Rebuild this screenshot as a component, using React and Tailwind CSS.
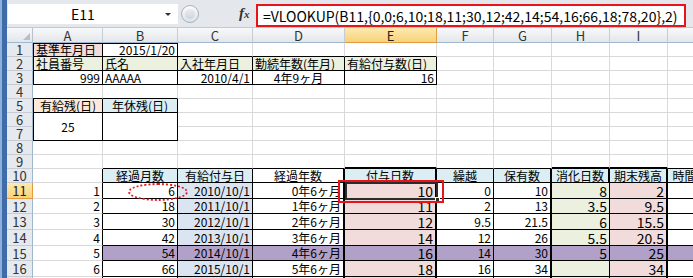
import React from "react";

const PINK = "bg-[#f2dcdb]";
const BLUE = "bg-[#dbe5f1]";
const AQUA = "bg-[#daeef3]";
const GREEN = "bg-[#ebf1de]";
const PEACH = "bg-[#fde9d9]";
const PURPLE = "bg-[#b1a0c7]";

const COLS = ["A", "B", "C", "D", "E", "F", "G", "H", "I", "J"];
const NROWS = 17;

function buildCells() {
  const cells = [];
  for (let r = 0; r <= NROWS + 1; r++) {
    const row = [];
    for (let c = 0; c <= 10; c++) {
      row.push({ t: 0, r: 0, b: 0, l: 0, text: "", align: "r", bg: "", big: false });
    }
    cells.push(row);
  }
  const all = (r1, r2, c1, c2) => {
    for (let r = r1; r <= r2; r++)
      for (let c = c1; c <= c2; c++) {
        const x = cells[r][c];
        x.t = Math.max(x.t, 1);
        x.r = Math.max(x.r, 1);
        x.b = Math.max(x.b, 1);
        x.l = Math.max(x.l, 1);
      }
  };
  const set = (r, c, o) => Object.assign(cells[r][c], o);

  set(1, 0, { text: "基準年月日", align: "l", bg: PINK });
  set(1, 1, { text: "2015/1/20" });
  all(1, 1, 0, 1);

  ["社員番号", "氏名", "入社年月日", "勤続年数(年月)", "有給付与数(日)"].forEach((t, c) =>
    set(2, c, { text: t, align: "l", bg: GREEN })
  );
  set(3, 0, { text: "999" });
  set(3, 1, { text: "AAAAA", align: "l" });
  set(3, 2, { text: "2010/4/1" });
  set(3, 3, { text: "4年9ヶ月", align: "c" });
  set(3, 4, { text: "16" });
  all(2, 3, 0, 4);

  set(5, 0, { text: "有給残(日)", align: "c", bg: PEACH });
  set(5, 1, { text: "年休残(日)", align: "c", bg: AQUA });
  set(6, 0, { text: "25", align: "c", span: true });
  set(6, 1, { span: true });
  set(7, 0, { skip: true });
  set(7, 1, { skip: true });
  all(5, 6, 0, 1);

  const heads = ["経過月数", "有給付与日", "経過年数", "付与日数", "繰越", "保有数", "消化日数", "期末残高", "時間有休"];
  const headBg = [AQUA, AQUA, "", AQUA, AQUA, AQUA, AQUA, AQUA, AQUA];
  heads.forEach((t, i) => set(10, i + 1, { text: t, align: "c", bg: headBg[i] }));
  all(10, 17, 1, 9);

  const B = [6, 18, 30, 42, 54, 66];
  const C = ["2010/10/1", "2011/10/1", "2012/10/1", "2013/10/1", "2014/10/1", "2015/10/1"];
  const D = ["0年6ヶ月", "1年6ヶ月", "2年6ヶ月", "3年6ヶ月", "4年6ヶ月", "5年6ヶ月"];
  const E = [10, 11, 12, 14, 16, 18];
  const F = [0, 2, 9.5, 12, 14, 16];
  const G = [10, 13, 21.5, 26, 30, 34];
  const H = [8, 3.5, 6, 5.5, 5, ""];
  const I = [2, 9.5, 15.5, 20.5, 25, 34];
  for (let k = 0; k < 7; k++) {
    const r = 11 + k;
    const has = k < 6;
    set(r, 0, { text: has ? String(k + 1) : "" });
    set(r, 1, { text: has ? String(B[k]) : "" });
    set(r, 2, { text: has ? C[k] : "", bg: BLUE });
    set(r, 3, { text: has ? D[k] : "" });
    set(r, 4, { text: has ? String(E[k]) : "", bg: PINK, big: true });
    set(r, 5, { text: has ? String(F[k]) : "" });
    set(r, 6, { text: has ? String(G[k]) : "" });
    set(r, 7, { text: has ? String(H[k]) : "", bg: GREEN, big: true });
    set(r, 8, { text: has ? String(I[k]) : "", bg: PINK, big: true });
  }
  for (let c = 1; c <= 9; c++) cells[15][c].bg = PURPLE;

  for (let r = 10; r <= 17; r++) {
    cells[r][4].l = 2;
    cells[r][4].r = 2;
    cells[r][7].l = 2;
    cells[r][8].r = 2;
  }
  cells[10][4].t = 2;
  cells[10][7].t = 2;
  cells[10][7].r = 2;
  cells[10][8].t = 2;
  cells[10][8].l = 2;
  return cells;
}

const RB = ["border-r border-r-[#d9d9d9]", "border-r border-r-black", "border-r-2 border-r-black"];
const BB = ["border-b border-b-[#d9d9d9]", "border-b border-b-black", "border-b-2 border-b-black"];
const ALIGN = { l: "justify-start pl-[2px]", r: "justify-end pr-[2px]", c: "justify-center" };

function Sheet() {
  const cells = buildCells();
  const out = [];

  // header row
  out.push(
    <div
      key="corner"
      className="relative border-r border-b border-r-[#b9c1cc] border-b-[#9eb6ce] bg-linear-to-b from-[#f7f8fa] to-[#e2e6eb]"
    >
      <svg className="absolute bottom-[2px] right-[2px]" width="7" height="7" viewBox="0 0 7 7">
        <path d="M7 0 L7 7 L0 7 Z" fill="#b7bfc9" />
      </svg>
    </div>
  );
  COLS.forEach((h) => {
    const sel = h === "E";
    out.push(
      <div
        key={"h" + h}
        className={
          "flex items-center justify-center border-r border-b text-[13px] leading-none " +
          (sel
            ? "border-r-[#e0a040] border-b-[#e29a3a] bg-linear-to-b from-[#fde9ae] to-[#f8d27c] text-[#222]"
            : "border-r-[#c5ccd5] border-b-[#9eb6ce] bg-linear-to-b from-[#f8f9fa] to-[#e3e6ea] text-[#333]")
        }
      >
        {h}
      </div>
    );
  });

  for (let r = 1; r <= NROWS; r++) {
    const sel = r === 11;
    out.push(
      <div
        key={"rh" + r}
        className={
          "flex items-center justify-center border-r border-b text-[13px] leading-none " +
          (sel
            ? "border-r-[#e29a3a] border-b-[#e29a3a] bg-linear-to-b from-[#fde9ae] to-[#f8d27c] text-[#222]"
            : "border-r-[#9eb6ce] border-b-[#c5ccd5] bg-[#e6e9ee] text-[#333]")
        }
      >
        {r}
      </div>
    );
    for (let c = 0; c < 10; c++) {
      const x = cells[r][c];
      if (x.skip) continue;
      const belowRow = x.span ? r + 2 : r + 1;
      const rr = Math.max(x.r, c < 9 ? cells[r][c + 1].l : 0);
      const bb = Math.max(x.b, cells[belowRow] ? cells[belowRow][c].t : 0);
      let cls =
        "flex items-center overflow-hidden whitespace-nowrap leading-none text-black " +
        RB[rr] +
        " " +
        BB[bb] +
        " " +
        ALIGN[x.align] +
        " " +
        (x.bg || "bg-white") +
        " " +
        (x.big ? "text-[14px]" : "text-[12px]");
      if (c === 0 && x.l > 0) cls += " border-l border-l-black";
      if (r === 1 && x.t > 0) cls += " border-t border-t-black";
      if (x.span) cls += " row-span-2";
      out.push(
        <div key={r + "-" + c} className={cls}>
          {x.text}
        </div>
      );
    }
  }

  return (
    <div className="grid grid-cols-[26px_70px_75px_75px_92px_92px_57px_58px_58px_58px_58px] grid-rows-[15px_14px_14px_14px_14px_14px_14px_14px_14px_14px_14px_16px_15px_16px_16px_15px_16px_20px]">
      {out}
    </div>
  );
}

function FormulaBar() {
  return (
    <div className="flex h-[28px] shrink-0 items-start border-b border-b-[#c3c9d1] bg-[#e4e8ed]">
      <div className="ml-[1px] mt-[4px] flex h-[20px] w-[170px] items-center bg-white">
        <span className="flex-1 text-center text-[14px] leading-none text-black">E11</span>
        <svg width="20" height="20" viewBox="0 0 20 20">
          <path d="M7 9 L13 9 L10 12 Z" fill="#333" />
        </svg>
      </div>
      <div className="ml-[3px] mt-[5px] h-[18px] w-[18px] rounded-full border border-[#a9b2be] bg-linear-to-b from-[#fafbfc] to-[#dde2e8] p-[3px]">
        <div className="h-full w-full rounded-full bg-linear-to-b from-[#e9ecef] to-[#cfd5dc]" />
      </div>
      <div className="ml-[40px] mt-[6px] w-[17px] font-['Liberation_Serif',serif] text-[15px] font-bold italic leading-none text-[#333]">
        f<span className="text-[11px]">x</span>
      </div>
      <div className="mt-[4px] flex h-[23px] w-[430px] items-center border-2 border-[#e8141a] bg-white pl-[5px] text-[14px] leading-none text-black">
        =VLOOKUP(B11,{"{"}0,0;6,10;18,11;30,12;42,14;54,16;66,18;78,20{"}"},2)
      </div>
    </div>
  );
}

export default function App() {
  return (
    <div className="relative flex h-[278px] w-[693px] overflow-hidden bg-white font-['Noto_Sans_CJK_JP','Noto_Sans',sans-serif]">
      <div className="flex w-[7px] shrink-0">
        <div className="w-[2px] bg-[#8eb0da]" />
        <div className="flex-1 bg-[#3e6cab]" />
      </div>
      <div className="flex min-w-0 flex-1 flex-col">
        <FormulaBar />
        <Sheet />
      </div>
      {/* selection box */}
      <div className="absolute left-[345px] top-[182px] h-[18px] w-[93px] border-2 border-[#2b2b2b]" />
      <div className="absolute left-[435px] top-[197px] h-[5px] w-[5px] border border-white bg-[#2b2b2b]" />
      {/* red highlight around E11 */}
      <div className="absolute left-[338px] top-[180px] h-[23px] w-[106px] border-2 border-[#e8141a]" />
      {/* dotted ellipse */}
      <div className="absolute left-[128px] top-[183px] h-[18px] w-[60px] rounded-[50%] border-2 border-dotted border-[#e8141a]" />
    </div>
  );
}
